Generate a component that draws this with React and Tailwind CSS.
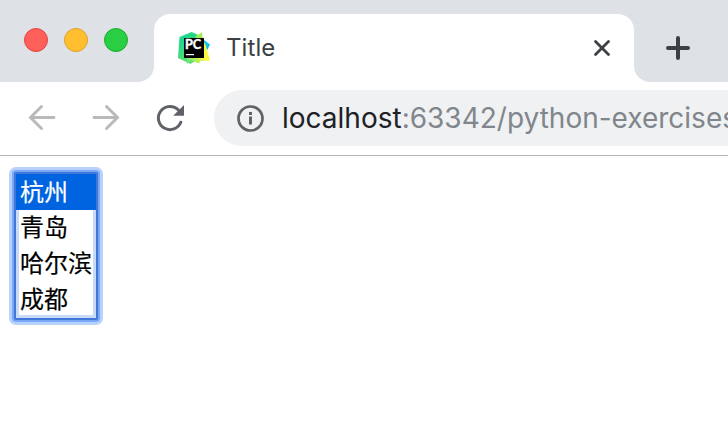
const cities = ['杭州', '青岛', '哈尔滨', '成都'];

function TabStrip() {
  return (
    <div className="flex h-[82px] bg-white">
      <div className="flex w-[154px] items-start gap-4 rounded-br-2xl bg-[#dee1e6] pl-6 pt-7">
        <span className="size-6 rounded-full border border-[#e2463f] bg-[#ff6059]" />
        <span className="size-6 rounded-full border border-[#dfa023] bg-[#ffbf2f]" />
        <span className="size-6 rounded-full border border-[#1aab29] bg-[#29ce42]" />
      </div>
      <div className="w-[480px] bg-[linear-gradient(#dee1e6_50%,#ffffff_50%)] pt-3.5">
        <div className="flex h-[68px] items-center rounded-t-2xl bg-white pl-6 pr-[23px]">
          <PyCharmLogo />
          <span className="ml-4 grow text-[24px] leading-8 tracking-[0.1px] text-[#3c4043]">Title</span>
          <svg width="18" height="18" viewBox="0 0 18 18" stroke="#3c4043" strokeWidth="2.8" strokeLinecap="round">
            <path d="M2.500 2.500l13 13M15.500 2.500l-13 13" />
          </svg>
        </div>
      </div>
      <div className="flex grow items-start rounded-bl-2xl bg-[#dee1e6] pl-8 pt-9">
        <svg width="24" height="24" viewBox="0 0 24 24" stroke="#3c4043" strokeWidth="4" strokeLinecap="round">
          <path d="M2 12h20M12 2v20" />
        </svg>
      </div>
    </div>
  );
}

function PyCharmLogo() {
  return (
    <svg width="32" height="32" viewBox="0 0 32 32">
      <defs>
        <linearGradient id="pcGreen" x1="0" y1="0" x2="0.4" y2="1">
          <stop offset="0.3" stopColor="#21d789" />
          <stop offset="1" stopColor="#5fe074" />
        </linearGradient>
        <linearGradient id="pcYellow" x1="1" y1="0" x2="0" y2="1">
          <stop offset="0.5" stopColor="#fcf840" />
          <stop offset="1" stopColor="#55e37b" />
        </linearGradient>
      </defs>
      <path d="M20 8l6 0 6 4.500-3.500 7L24 22z" fill="#07c3f2" />
      <path d="M1.500 5L13.500 0l8 3.500L17 29l-4.500 3L0 26z" fill="url(#pcGreen)" />
      <path d="M17 5l7-5 1 9z" fill="#a5ed4e" />
      <path d="M9 23l18-12 5 17.500-9.500.5-1.500 2.500L12.500 28 9 32z" fill="url(#pcYellow)" />
      <path d="M6 6h20v20H6z" fill="#000" />
      <text x="7" y="17" fontSize="12.700" fontWeight="700" fill="#fff" stroke="#fff" strokeWidth="0.400" className="font-['Lato',sans-serif]">PC</text>
      <path d="M8 22h8v1.200H8z" fill="#fff" />
    </svg>
  );
}

function Toolbar() {
  return (
    <div className="flex h-[74px] items-start overflow-hidden border-b border-[#b4b5b8] bg-white pt-2">
      <div className="flex h-14 w-[214px] shrink-0 items-center pl-7">
        <svg width="28" height="28" viewBox="0 0 28 28" fill="none" stroke="#b9b9b9" strokeWidth="2.900" strokeLinecap="round">
          <path d="M26 13.500H3M13.500 2.500l-11 11 11 11" />
        </svg>
        <svg className="ml-9" width="28" height="28" viewBox="0 0 28 28" fill="none" stroke="#b9b9b9" strokeWidth="2.900" strokeLinecap="round">
          <path d="M2 13.500h23M14.500 2.500l11 11-11 11" />
        </svg>
        <svg className="ml-9" width="28" height="28" viewBox="0 0 28 28" fill="none" stroke="#5f6368" strokeWidth="3" strokeLinecap="round">
          <path d="M24.800 18.200A11.600 11.600 0 1 1 22.400 6" />
          <path d="M28 1v10.800H17.200z" fill="#5f6368" stroke="none" />
        </svg>
      </div>
      <div className="flex h-14 min-w-0 grow items-center rounded-l-full bg-[#eff1f3] pl-[23px]">
        <svg className="shrink-0" width="27" height="27" viewBox="0 0 27 27" fill="none" stroke="#5f6368">
          <circle cx="13.500" cy="13.500" r="12" strokeWidth="2.700" />
          <path d="M13.500 11.500v8M13.500 7v3" strokeWidth="3" />
        </svg>
        <span className="ml-[18px] whitespace-nowrap text-[28px] leading-10 text-[#80868b]">
          <span className="text-[#202124]">localhost</span>
          :63342/python-exercises
        </span>
      </div>
    </div>
  );
}

function CityList() {
  return (
    <div className="w-[94px] rounded-[7px] border-3 border-[#b8d2fc] bg-[#b8d2fc]">
      <div className="rounded-[4px] border-2 border-[#79a8f8] bg-[#79a8f8]">
        <div className="rounded-[2px] border-2 border-[#3f78d8] bg-[#c8daf9]">
          <ul className="font-['Noto_Sans_CJK_SC',sans-serif] text-[24px] text-black [-webkit-text-stroke:0.2px]" role="listbox">
            {cities.map((city, index) => (
              <li
                key={city}
                role="option"
                aria-selected={index === 0}
                className={
                  index === 0
                    ? 'h-9 whitespace-nowrap bg-[#0064e1] pl-1 leading-[33px] text-white'
                    : 'mx-[3px] h-9 whitespace-nowrap bg-white pl-px leading-[32px] last:mb-[3px] last:h-[33px]'
                }
              >
                {city}
              </li>
            ))}
          </ul>
        </div>
      </div>
    </div>
  );
}

export default function App() {
  return (
    <div className="flex h-screen flex-col overflow-hidden bg-white font-[Inter,Roboto,sans-serif]">
      <TabStrip />
      <Toolbar />
      <main className="pl-[9px] pt-[11px]">
        <CityList />
      </main>
    </div>
  );
}
